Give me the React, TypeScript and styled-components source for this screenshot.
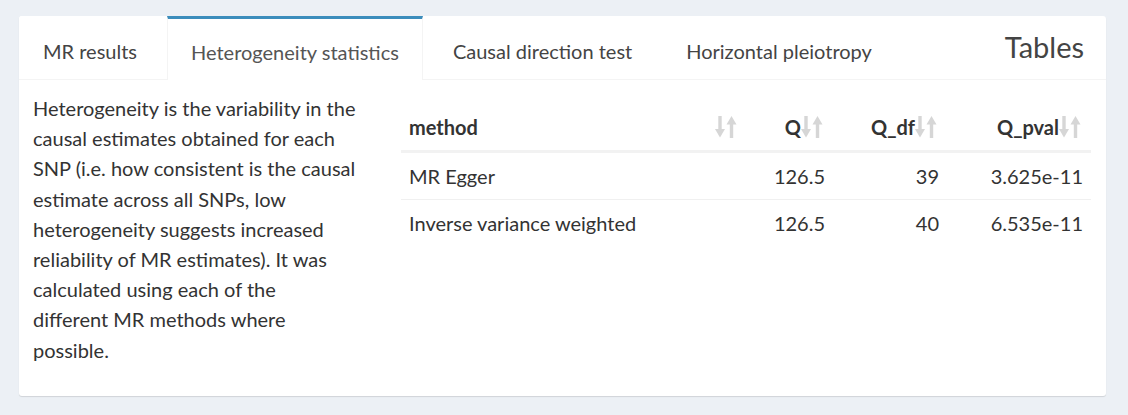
import React from "react";
import styled, { createGlobalStyle } from "styled-components";

const Global = createGlobalStyle`
  html, body { margin: 0; padding: 0; background: #ecf0f5; }
  body { font-family: Lato, "Noto Sans", sans-serif; color: #333; }
`;

const Page = styled.div`
  padding: 16px 22px 21px 19px;
`;

const Card = styled.div`
  background: #fff;
  border-radius: 3px;
  box-shadow: 0 1px 1px rgba(0, 0, 0, 0.12);
`;

const TabBar = styled.ul`
  display: flex;
  align-items: stretch;
  margin: 0;
  padding: 0;
  list-style: none;
  height: 64px;
  box-sizing: border-box;
  border-bottom: 1px solid #f4f4f4;
`;

const Tab = styled.li<{ $active?: boolean }>`
  display: flex;
  align-items: center;
  box-sizing: border-box;
  padding: 4px 23px 0;
  margin: 0 6px ${(p) => (p.$active ? "-1px" : "0")} 0;
  background: #fff;
  border-top: 3px solid ${(p) => (p.$active ? "#3c8dbc" : "transparent")};
  border-left: 1px solid ${(p) => (p.$active ? "#f4f4f4" : "transparent")};
  border-right: 1px solid ${(p) => (p.$active ? "#f4f4f4" : "transparent")};
  border-top-left-radius: ${(p) => (p.$active ? "0" : "3px")};
  font-size: 20px;
  color: ${(p) => (p.$active ? "#555" : "#444")};
  white-space: nowrap;
`;

const Title = styled.li`
  margin-left: auto;
  padding: 0 22px 3px 0;
  display: flex;
  align-items: center;
  font-size: 29px;
  color: #444;
`;

const Content = styled.div`
  display: grid;
  grid-template-columns: 368px 1fr;
  padding: 13px 15px 31px 14px;
`;

const Description = styled.p`
  margin: 0;
  font-size: 20px;
  line-height: 30.2px;
  color: #333;
`;

const Table = styled.table`
  width: 100%;
  margin-top: 11px;
  border-collapse: collapse;
  font-size: 20px;
  color: #333;
`;

const HeadCell = styled.th<{ $w: number }>`
  width: ${(p) => p.$w}px;
  padding: 10px 10px 10px 8px;
  height: 47px;
  box-sizing: border-box;
  border-bottom: 3px solid #f2f2f2;
  font-weight: 700;
`;

const HeadInner = styled.div<{ $num?: boolean }>`
  display: flex;
  align-items: center;
  justify-content: ${(p) => (p.$num ? "flex-end" : "space-between")};
`;

const Cell = styled.td<{ $num?: boolean }>`
  padding: 0 8px;
  height: 46px;
  text-align: ${(p) => (p.$num ? "right" : "left")};
`;

const Row = styled.tr<{ $last?: boolean }>`
  border-bottom: ${(p) => (p.$last ? "none" : "1px solid #f0f0f0")};
`;

const SortIcon = () => (
  <svg width="22" height="22" viewBox="0 0 22 22" fill="#d6d6d6">
    <rect x="3.3" y="0" width="3.4" height="15" />
    <polygon points="0,13 10,13 5,21.5" />
    <rect x="14.8" y="6" width="3.4" height="16" />
    <polygon points="11.5,8.5 21.5,8.5 16.5,0" />
  </svg>
);

const columns = [
  { key: "method", label: "method", w: 346, num: false },
  { key: "Q", label: "Q", w: 86, num: true },
  { key: "Q_df", label: "Q_df", w: 114, num: true },
  { key: "Q_pval", label: "Q_pval", w: 144, num: true },
];

const rows = [
  { method: "MR Egger", Q: "126.5", Q_df: "39", Q_pval: "3.625e-11" },
  { method: "Inverse variance weighted", Q: "126.5", Q_df: "40", Q_pval: "6.535e-11" },
];

const tabs = ["MR results", "Heterogeneity statistics", "Causal direction test", "Horizontal pleiotropy"];

export default function App() {
  return (
    <>
      <Global />
      <Page>
        <Card>
          <TabBar>
            {tabs.map((t) => (
              <Tab key={t} $active={t === "Heterogeneity statistics"}>
                {t}
              </Tab>
            ))}
            <Title>Tables</Title>
          </TabBar>
          <Content>
            <Description>
              Heterogeneity is the variability in the
              <br />
              causal estimates obtained for each
              <br />
              SNP (i.e. how consistent is the causal
              <br />
              estimate across all SNPs, low
              <br />
              heterogeneity suggests increased
              <br />
              reliability of MR estimates). It was
              <br />
              calculated using each of the
              <br />
              different MR methods where
              <br />
              possible.
            </Description>
            <div>
              <Table>
                <thead>
                  <tr>
                    {columns.map((c) => (
                      <HeadCell key={c.key} $w={c.w}>
                        <HeadInner $num={c.num}>
                          <span>{c.label}</span>
                          <SortIcon />
                        </HeadInner>
                      </HeadCell>
                    ))}
                  </tr>
                </thead>
                <tbody>
                  {rows.map((r, i) => (
                    <Row key={r.method} $last={i === rows.length - 1}>
                      {columns.map((c) => (
                        <Cell key={c.key} $num={c.num}>
                          {(r as Record<string, string>)[c.key]}
                        </Cell>
                      ))}
                    </Row>
                  ))}
                </tbody>
              </Table>
            </div>
          </Content>
        </Card>
      </Page>
    </>
  );
}
